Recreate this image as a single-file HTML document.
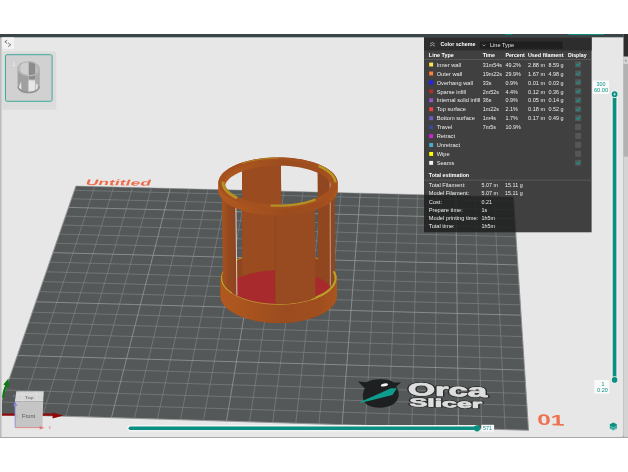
<!DOCTYPE html>
<html><head><meta charset="utf-8"><title>OrcaSlicer preview</title>
<style>html,body{margin:0;padding:0;background:#fff;}body{width:628px;height:472px;overflow:hidden;font-family:"Liberation Sans",sans-serif;}svg{display:block;opacity:0.999;will-change:transform}</style>
</head><body>
<svg width="628" height="472" viewBox="0 0 628 472" font-family="'Liberation Sans', sans-serif" shape-rendering="geometricPrecision">
<rect x="0" y="0" width="628" height="472" fill="#fff"/>
<rect x="0" y="34" width="628" height="404" fill="#a8a8a8"/>
<rect x="0" y="34" width="1.1" height="402.9" fill="#bcbcbc"/><rect x="1.1" y="34" width="1" height="402.9" fill="#d2d2d2"/>
<path d="M2,34 H623.3 V434.4 Q623.3,436.9 620.8,436.9 H2 Z" fill="#e7e7e7"/>
<rect x="623.6" y="34" width="4.4" height="402.9" fill="#d4d4d4"/>
<rect x="623.6" y="64" width="4.4" height="92.6" fill="#b2b2b2"/>
<rect x="623.6" y="56.5" width="4.4" height="7.5" fill="#d4d4d4"/>
<path d="M624.6,61.3 L625.8,59.6 L627,61.3 Z" fill="#888"/>
<clipPath id="vp"><path d="M2,37 H623.3 V434.4 Q623.3,436.9 620.8,436.9 H2 Z"/></clipPath>
<g clip-path="url(#vp)">
<polygon points="-3.00,414.20 528.50,430.30 513.40,197.00 75.90,186.10" fill="#545858"/>
<path d="M19.84,414.89L94.74,186.57M42.70,415.58L113.59,187.04M65.59,416.28L132.46,187.51M88.50,416.97L151.35,187.98M134.39,418.36L189.18,188.92M157.37,419.06L208.11,189.39M180.38,419.75L227.07,189.87M203.42,420.45L246.04,190.34M249.56,421.85L284.03,191.29M272.67,422.55L303.05,191.76M295.80,423.25L322.09,192.23M318.96,423.95L341.14,192.71M365.35,425.36L379.31,193.66M388.58,426.06L398.41,194.14M411.84,426.77L417.53,194.61M435.12,427.47L436.67,195.09M481.76,428.88L475.00,196.04M505.12,429.59L494.19,196.52M528.50,430.30L513.40,197.00M1.22,402.00L527.69,417.80M5.36,390.04L526.90,405.54M9.42,378.29L526.12,393.51M13.41,366.76L525.35,381.70M21.17,344.33L523.87,358.72M24.95,333.41L523.14,347.55M28.66,322.68L522.43,336.58M32.30,312.15L521.74,325.80M39.40,291.62L520.38,304.80M42.86,281.62L519.72,294.58M46.26,271.79L519.06,284.53M49.60,262.13L518.43,274.65M56.12,243.28L517.18,255.38M59.30,234.08L516.57,245.99M62.43,225.04L515.97,236.76M65.51,216.14L515.38,227.67M71.52,198.77L514.24,209.93M74.45,190.29L513.68,201.28" stroke="#868989" stroke-width="0.7" fill="none" opacity="0.85"/>
<path d="M-3.00,414.20L75.90,186.10M111.43,417.67L170.25,188.45M226.48,421.15L265.03,190.81M342.14,424.65L360.22,193.18M458.43,428.18L455.83,195.57M-3.00,414.20L528.50,430.30M17.32,355.44L524.60,370.10M35.88,301.80L521.05,315.21M52.89,252.62L517.80,264.93M68.54,207.39L514.81,218.73" stroke="#9fa1a1" stroke-width="0.75" fill="none" opacity="0.95"/>
<polygon points="-3.00,414.20 528.50,430.30 513.40,197.00 75.90,186.10" fill="none" stroke="#8a8d8d" stroke-width="0.5"/>
<g transform="matrix(1,0.013,-0.38,1,84.9,184.9)">
<text x="0.00" y="0.00" font-size="8.0" font-weight="bold" fill="#ee6b48" text-anchor="start" textLength="65.20" lengthAdjust="spacingAndGlyphs" >Untitled</text>
</g>
<g transform="matrix(1,0.03,0.04,1,537.5,424.8)">
<text x="0.00" y="0.00" font-size="15.2" font-weight="bold" fill="#ee7150" text-anchor="start" textLength="27.00" lengthAdjust="spacingAndGlyphs" >01</text>
</g>
<g id="logo">
<path d="M357.8,381.6 L366,382.2 Q372,379.2 381,379.3 Q389,379.4 394,382.4 L401.2,382.6 L396.2,386.6 Q399.3,391 398.6,396.5 Q396.5,405.8 383.5,407.6 Q368,408.8 363.8,401 Q361.5,394.5 364.8,388.2 Z" fill="#1d1f20"/>
<path d="M360.2,401.9 L391,388.3 L396.9,388.3 L392.4,395 L360.4,403 Z" fill="#0d9c8e"/>
<ellipse cx="384.4" cy="384.9" rx="3.6" ry="1.5" transform="rotate(-12 384.4 384.9)" fill="#f4f4f4"/>
<g transform="matrix(1,0.028,0,1,0,0)">
<text x="408.00" y="383.50" font-size="17.6" font-weight="bold" fill="#2b2d2d" text-anchor="start" textLength="79.20" lengthAdjust="spacingAndGlyphs" stroke="#2b2d2d" stroke-width="2.3" stroke-linejoin="round">Orca</text>
<text x="408.00" y="383.50" font-size="17.6" font-weight="bold" fill="#dedede" text-anchor="start" textLength="79.20" lengthAdjust="spacingAndGlyphs" stroke="#dedede" stroke-width="0.8" stroke-linejoin="round">Orca</text>
<text x="409.60" y="394.60" font-size="11.4" font-weight="bold" fill="#2b2d2d" text-anchor="start" textLength="72.50" lengthAdjust="spacingAndGlyphs" stroke="#2b2d2d" stroke-width="2.0" stroke-linejoin="round">Slicer</text>
<text x="409.60" y="394.60" font-size="11.4" font-weight="bold" fill="#dedede" text-anchor="start" textLength="72.50" lengthAdjust="spacingAndGlyphs" stroke="#dedede" stroke-width="0.7" stroke-linejoin="round">Slicer</text>
</g></g>
<path d="M2,413.5 H52.6 V412.4 L63.6,415.6 L52.6,418.6 V415.8 H2 Z" fill="#8f0a0a"/>
<path d="M2,397.8 Q2.6,390 5.2,385.4 L3.4,384.6 L8.4,378.6 L9.2,386.6 L7.4,386 Q4.6,391 4,397.8 Z" fill="#0a7a12"/>
<defs><linearGradient id="gring" gradientUnits="userSpaceOnUse" x1="218" y1="0" x2="338" y2="0"><stop offset="0" stop-color="#b2591f"/><stop offset="0.22" stop-color="#aa541f"/><stop offset="0.55" stop-color="#9b4c1f"/><stop offset="0.85" stop-color="#a04e1f"/><stop offset="1" stop-color="#ab561f"/></linearGradient><linearGradient id="gpil" gradientUnits="userSpaceOnUse" x1="221" y1="0" x2="237" y2="0"><stop offset="0" stop-color="#ab551f"/><stop offset="0.45" stop-color="#95491f"/><stop offset="1" stop-color="#8d4520"/></linearGradient></defs>
<polygon points="337.00,278.00 336.82,275.88 336.28,273.78 335.39,271.70 334.15,269.66 332.56,267.67 330.65,265.74 328.41,263.89 325.87,262.13 323.03,260.46 319.92,258.91 316.56,257.47 312.97,256.16 309.16,254.98 305.17,253.94 301.01,253.06 296.72,252.32 292.31,251.75 287.82,251.33 283.27,251.08 278.70,251.00 274.13,251.08 269.58,251.33 265.09,251.75 260.68,252.32 256.39,253.06 252.23,253.94 248.24,254.98 244.43,256.16 240.84,257.47 237.48,258.91 234.37,260.46 231.53,262.13 228.99,263.89 226.75,265.74 224.84,267.67 223.25,269.66 222.01,271.70 221.12,273.78 220.58,275.88 220.40,278.00 220.40,296.00 220.58,298.12 221.12,300.22 222.01,302.30 223.25,304.34 224.84,306.33 226.75,308.26 228.99,310.11 231.53,311.87 234.37,313.54 237.48,315.09 240.84,316.53 244.43,317.84 248.24,319.02 252.23,320.06 256.39,320.94 260.68,321.68 265.09,322.25 269.58,322.67 274.13,322.92 278.70,323.00 283.27,322.92 287.82,322.67 292.31,322.25 296.72,321.68 301.01,320.94 305.17,320.06 309.16,319.02 312.97,317.84 316.56,316.53 319.92,315.09 323.03,313.54 325.87,311.87 328.41,310.11 330.65,308.26 332.56,306.33 334.15,304.34 335.39,302.30 336.28,300.22 336.82,298.12 337.00,296.00" fill="#90461f" />
<polygon points="334.80,296.00 334.63,293.96 334.11,291.93 333.24,289.93 332.04,287.97 330.51,286.05 328.66,284.20 326.50,282.42 324.05,280.72 321.31,279.11 318.31,277.62 315.06,276.23 311.59,274.97 307.92,273.83 304.06,272.83 300.05,271.98 295.90,271.27 291.64,270.72 287.31,270.32 282.92,270.08 278.50,270.00 274.08,270.08 269.69,270.32 265.36,270.72 261.10,271.27 256.95,271.98 252.94,272.83 249.08,273.83 245.41,274.97 241.94,276.23 238.69,277.62 235.69,279.11 232.95,280.72 230.50,282.42 228.34,284.20 226.49,286.05 224.96,287.97 223.76,289.93 222.89,291.93 222.37,293.96 222.20,296.00 222.37,298.04 222.89,300.07 223.76,302.07 224.96,304.03 226.49,305.95 228.34,307.80 230.50,309.58 232.95,311.28 235.69,312.89 238.69,314.38 241.94,315.77 245.41,317.03 249.08,318.17 252.94,319.17 256.95,320.02 261.10,320.73 265.36,321.28 269.69,321.68 274.08,321.92 278.50,322.00 282.92,321.92 287.31,321.68 291.64,321.28 295.90,320.73 300.05,320.02 304.06,319.17 307.92,318.17 311.59,317.03 315.06,315.77 318.31,314.38 321.31,312.89 324.05,311.28 326.50,309.58 328.66,307.80 330.51,305.95 332.04,304.03 333.24,302.07 334.11,300.07 334.63,298.04 334.80,296.00" fill="#a82a2d" />
<polygon points="280.95,164.43 279.90,164.41 278.85,164.40 277.79,164.40 276.74,164.41 275.69,164.42 274.64,164.44 273.59,164.47 272.55,164.51 271.50,164.56 270.46,164.62 269.42,164.68 268.38,164.76 267.34,164.84 266.31,164.93 265.29,165.03 264.27,165.13 263.25,165.25 262.24,165.37 261.23,165.50 260.23,165.64 259.23,165.79 258.25,165.94 257.27,166.11 256.29,166.28 255.33,166.46 254.37,166.64 253.42,166.84 252.48,167.04 251.54,167.25 250.62,167.47 249.71,167.69 248.80,167.92 247.91,168.16 247.02,168.41 246.15,168.66 245.29,168.92 244.44,169.19 243.60,169.46 242.78,169.74 241.96,170.03 242.46,276.02 243.28,275.72 244.10,275.42 244.94,275.12 245.79,274.84 246.65,274.56 247.52,274.29 248.41,274.03 249.30,273.77 250.21,273.52 251.12,273.28 252.04,273.05 252.98,272.83 253.92,272.61 254.87,272.40 255.83,272.20 256.79,272.01 257.77,271.83 258.75,271.65 259.73,271.49 260.73,271.33 261.73,271.18 262.74,271.04 263.75,270.91 264.77,270.79 265.79,270.67 266.81,270.57 267.84,270.47 268.88,270.38 269.92,270.30 270.96,270.23 272.00,270.17 273.05,270.12 274.09,270.08 275.14,270.05 276.19,270.02 277.24,270.01 278.29,270.00 279.35,270.00 280.40,270.01 281.45,270.04" fill="#9a4b20" />
<polygon points="334.30,188.70 334.29,188.22 334.26,187.75 334.20,187.27 334.13,186.79 334.03,186.32 333.91,185.84 333.77,185.37 333.61,184.90 333.42,184.43 333.22,183.96 332.99,183.49 332.74,183.03 332.48,182.56 332.19,182.10 331.88,181.65 331.54,181.19 331.19,180.74 330.82,180.29 330.43,179.84 330.01,179.40 329.58,178.96 329.13,178.53 328.66,178.10 328.16,177.67 327.65,177.25 327.12,176.83 326.57,176.41 326.00,176.00 325.42,175.60 324.81,175.20 324.19,174.81 323.55,174.42 322.89,174.03 322.21,173.66 321.52,173.28 320.81,172.92 320.08,172.56 319.34,172.21 318.58,171.86 317.81,171.52 318.31,277.62 319.08,277.98 319.84,278.35 320.58,278.73 321.31,279.11 322.02,279.51 322.71,279.90 323.39,280.31 324.05,280.72 324.69,281.13 325.31,281.56 325.92,281.98 326.50,282.42 327.07,282.85 327.62,283.30 328.15,283.74 328.66,284.20 329.16,284.65 329.63,285.11 330.08,285.58 330.51,286.05 330.93,286.52 331.32,287.00 331.69,287.48 332.04,287.97 332.38,288.45 332.69,288.94 332.98,289.44 333.24,289.93 333.49,290.43 333.72,290.93 333.92,291.43 334.11,291.93 334.27,292.44 334.41,292.94 334.53,293.45 334.63,293.96 334.70,294.47 334.76,294.98 334.79,295.49 334.80,296.00" fill="#90461f" />
<polyline points="336.00,278.00 335.82,275.93 335.29,273.87 334.42,271.84 333.20,269.84 331.64,267.90 329.75,266.01 327.56,264.21 325.06,262.48 322.27,260.85 319.22,259.33 315.91,257.93 312.38,256.64 308.64,255.49 304.71,254.48 300.63,253.61 296.41,252.89 292.08,252.33 287.66,251.93 283.20,251.68 278.70,251.60 274.20,251.68 269.74,251.93 265.32,252.33 260.99,252.89 256.77,253.61 252.69,254.48 248.76,255.49 245.02,256.64 241.49,257.93 238.18,259.33 235.13,260.85 232.34,262.48 229.84,264.21 227.65,266.01 225.76,267.90 224.20,269.84 222.98,271.84 222.11,273.87 221.58,275.93 221.40,278.00" fill="none" stroke="#b8a126" stroke-width="1.0" />
<polygon points="280.95,164.43 279.90,164.41 278.85,164.40 277.79,164.40 276.74,164.41 275.69,164.42 274.64,164.44 273.59,164.47 272.55,164.51 271.50,164.56 270.46,164.62 269.42,164.68 268.38,164.76 267.34,164.84 266.31,164.93 265.29,165.03 264.27,165.13 263.25,165.25 262.24,165.37 261.23,165.50 260.23,165.64 259.23,165.79 258.25,165.94 257.27,166.11 256.29,166.28 255.33,166.46 254.37,166.64 253.42,166.84 252.48,167.04 251.54,167.25 250.62,167.47 249.71,167.69 248.80,167.92 247.91,168.16 247.02,168.41 246.15,168.66 245.29,168.92 244.44,169.19 243.60,169.46 242.78,169.74 241.96,170.03 242.92,259.10 243.73,258.80 244.55,258.50 245.38,258.20 246.22,257.92 247.08,257.64 247.94,257.37 248.82,257.11 249.71,256.86 250.61,256.61 251.51,256.37 252.43,256.14 253.36,255.91 254.29,255.70 255.23,255.49 256.19,255.29 257.15,255.10 258.11,254.92 259.09,254.75 260.07,254.58 261.06,254.42 262.05,254.28 263.05,254.14 264.05,254.00 265.06,253.88 266.08,253.77 267.10,253.66 268.12,253.57 269.15,253.48 270.18,253.40 271.21,253.33 272.25,253.27 273.28,253.22 274.32,253.18 275.37,253.15 276.41,253.12 277.45,253.11 278.50,253.10 279.54,253.10 280.58,253.11 281.63,253.14" fill="#9a4b20" />
<polygon points="334.30,188.70 334.29,188.22 334.26,187.75 334.20,187.27 334.13,186.79 334.03,186.32 333.91,185.84 333.77,185.37 333.61,184.90 333.42,184.43 333.22,183.96 332.99,183.49 332.74,183.03 332.48,182.56 332.19,182.10 331.88,181.65 331.54,181.19 331.19,180.74 330.82,180.29 330.43,179.84 330.01,179.40 329.58,178.96 329.13,178.53 328.66,178.10 328.16,177.67 327.65,177.25 327.12,176.83 326.57,176.41 326.00,176.00 325.42,175.60 324.81,175.20 324.19,174.81 323.55,174.42 322.89,174.03 322.21,173.66 321.52,173.28 320.81,172.92 320.08,172.56 319.34,172.21 318.58,171.86 317.81,171.52 318.23,260.69 319.00,261.05 319.75,261.42 320.49,261.80 321.21,262.18 321.91,262.57 322.60,262.97 323.27,263.37 323.92,263.78 324.56,264.19 325.18,264.61 325.78,265.04 326.36,265.47 326.93,265.90 327.47,266.34 328.00,266.79 328.51,267.24 329.00,267.70 329.47,268.16 329.91,268.62 330.34,269.09 330.75,269.56 331.14,270.04 331.51,270.51 331.86,271.00 332.19,271.48 332.50,271.97 332.79,272.46 333.06,272.95 333.30,273.45 333.53,273.95 333.73,274.45 333.91,274.95 334.07,275.45 334.21,275.96 334.33,276.46 334.43,276.97 334.50,277.48 334.56,277.98 334.59,278.49 334.60,279.00" fill="#90461f" />
<polygon points="334.60,278.80 334.43,276.77 333.91,274.75 333.06,272.75 331.86,270.80 330.34,268.89 328.51,267.04 326.36,265.27 323.92,263.58 321.21,261.98 318.23,260.49 315.00,259.11 311.56,257.85 307.91,256.72 304.08,255.72 300.09,254.87 295.97,254.17 291.75,253.62 287.44,253.22 283.09,252.98 278.70,252.90 274.31,252.98 269.96,253.22 265.65,253.62 261.43,254.17 257.31,254.87 253.32,255.72 249.49,256.72 245.84,257.85 242.40,259.11 239.17,260.49 236.19,261.98 233.48,263.58 231.04,265.27 228.89,267.04 227.06,268.89 225.54,270.80 224.34,272.75 223.49,274.75 222.97,276.77 222.80,278.80 222.20,296.00 222.37,293.96 222.89,291.93 223.76,289.93 224.96,287.97 226.49,286.05 228.34,284.20 230.50,282.42 232.95,280.72 235.69,279.11 238.69,277.62 241.94,276.23 245.41,274.97 249.08,273.83 252.94,272.83 256.95,271.98 261.10,271.27 265.36,270.72 269.69,270.32 274.08,270.08 278.50,270.00 282.92,270.08 287.31,270.32 291.64,270.72 295.90,271.27 300.05,271.98 304.06,272.83 307.92,273.83 311.59,274.97 315.06,276.23 318.31,277.62 321.31,279.11 324.05,280.72 326.50,282.42 328.66,284.20 330.51,286.05 332.04,287.97 333.24,289.93 334.11,291.93 334.63,293.96 334.80,296.00" fill="#90461f" />
<polygon points="280.95,164.43 279.90,164.41 278.85,164.40 277.79,164.40 276.74,164.41 275.69,164.42 274.64,164.44 273.59,164.47 272.55,164.51 271.50,164.56 270.46,164.62 269.42,164.68 268.38,164.76 267.34,164.84 266.31,164.93 265.29,165.03 264.27,165.13 263.25,165.25 262.24,165.37 261.23,165.50 260.23,165.64 259.23,165.79 258.25,165.94 257.27,166.11 256.29,166.28 255.33,166.46 254.37,166.64 253.42,166.84 252.48,167.04 251.54,167.25 250.62,167.47 249.71,167.69 248.80,167.92 247.91,168.16 247.02,168.41 246.15,168.66 245.29,168.92 244.44,169.19 243.60,169.46 242.78,169.74 241.96,170.03 242.46,276.02 243.28,275.72 244.10,275.42 244.94,275.12 245.79,274.84 246.65,274.56 247.52,274.29 248.41,274.03 249.30,273.77 250.21,273.52 251.12,273.28 252.04,273.05 252.98,272.83 253.92,272.61 254.87,272.40 255.83,272.20 256.79,272.01 257.77,271.83 258.75,271.65 259.73,271.49 260.73,271.33 261.73,271.18 262.74,271.04 263.75,270.91 264.77,270.79 265.79,270.67 266.81,270.57 267.84,270.47 268.88,270.38 269.92,270.30 270.96,270.23 272.00,270.17 273.05,270.12 274.09,270.08 275.14,270.05 276.19,270.02 277.24,270.01 278.29,270.00 279.35,270.00 280.40,270.01 281.45,270.04" fill="#9a4b20" />
<polygon points="334.30,188.70 334.29,188.22 334.26,187.75 334.20,187.27 334.13,186.79 334.03,186.32 333.91,185.84 333.77,185.37 333.61,184.90 333.42,184.43 333.22,183.96 332.99,183.49 332.74,183.03 332.48,182.56 332.19,182.10 331.88,181.65 331.54,181.19 331.19,180.74 330.82,180.29 330.43,179.84 330.01,179.40 329.58,178.96 329.13,178.53 328.66,178.10 328.16,177.67 327.65,177.25 327.12,176.83 326.57,176.41 326.00,176.00 325.42,175.60 324.81,175.20 324.19,174.81 323.55,174.42 322.89,174.03 322.21,173.66 321.52,173.28 320.81,172.92 320.08,172.56 319.34,172.21 318.58,171.86 317.81,171.52 318.31,277.62 319.08,277.98 319.84,278.35 320.58,278.73 321.31,279.11 322.02,279.51 322.71,279.90 323.39,280.31 324.05,280.72 324.69,281.13 325.31,281.56 325.92,281.98 326.50,282.42 327.07,282.85 327.62,283.30 328.15,283.74 328.66,284.20 329.16,284.65 329.63,285.11 330.08,285.58 330.51,286.05 330.93,286.52 331.32,287.00 331.69,287.48 332.04,287.97 332.38,288.45 332.69,288.94 332.98,289.44 333.24,289.93 333.49,290.43 333.72,290.93 333.92,291.43 334.11,291.93 334.27,292.44 334.41,292.94 334.53,293.45 334.63,293.96 334.70,294.47 334.76,294.98 334.79,295.49 334.80,296.00" fill="#90461f" />
<polygon points="220.40,278.00 220.58,280.12 221.12,282.22 222.01,284.30 223.25,286.34 224.84,288.33 226.75,290.26 228.99,292.11 231.53,293.87 234.37,295.54 237.48,297.09 240.84,298.53 244.43,299.84 248.24,301.02 252.23,302.06 256.39,302.94 260.68,303.68 265.09,304.25 269.58,304.67 274.13,304.92 278.70,305.00 283.27,304.92 287.82,304.67 292.31,304.25 296.72,303.68 301.01,302.94 305.17,302.06 309.16,301.02 312.97,299.84 316.56,298.53 319.92,297.09 323.03,295.54 325.87,293.87 328.41,292.11 330.65,290.26 332.56,288.33 334.15,286.34 335.39,284.30 336.28,282.22 336.82,280.12 337.00,278.00 337.00,296.00 336.82,298.12 336.28,300.22 335.39,302.30 334.15,304.34 332.56,306.33 330.65,308.26 328.41,310.11 325.87,311.87 323.03,313.54 319.92,315.09 316.56,316.53 312.97,317.84 309.16,319.02 305.17,320.06 301.01,320.94 296.72,321.68 292.31,322.25 287.82,322.67 283.27,322.92 278.70,323.00 274.13,322.92 269.58,322.67 265.09,322.25 260.68,321.68 256.39,320.94 252.23,320.06 248.24,319.02 244.43,317.84 240.84,316.53 237.48,315.09 234.37,313.54 231.53,311.87 228.99,310.11 226.75,308.26 224.84,306.33 223.25,304.34 222.01,302.30 221.12,300.22 220.58,298.12 220.40,296.00" fill="url(#gring)" />
<polyline points="221.30,278.00 221.48,280.07 222.01,282.13 222.89,284.16 224.11,286.16 225.67,288.10 227.56,289.99 229.76,291.79 232.26,293.52 235.05,295.15 238.11,296.67 241.42,298.07 244.96,299.36 248.71,300.51 252.64,301.52 256.73,302.39 260.96,303.11 265.30,303.67 269.72,304.07 274.20,304.32 278.70,304.40 283.20,304.32 287.68,304.07 292.10,303.67 296.44,303.11 300.67,302.39 304.76,301.52 308.69,300.51 312.44,299.36 315.98,298.07 319.29,296.67 322.35,295.15 325.14,293.52 327.64,291.79 329.84,289.99 331.73,288.10 333.29,286.16 334.51,284.16 335.39,282.13 335.92,280.07 336.10,278.00" fill="none" stroke="#b8a126" stroke-width="0.9" />
<polyline points="311.36,299.13 312.77,298.67 314.13,298.19 315.47,297.69 316.77,297.17 318.04,296.64 319.27,296.08 320.46,295.51 321.62,294.93 322.73,294.32 323.80,293.71 324.84,293.07 325.82,292.43 326.77,291.77 327.67,291.09 328.52,290.41 329.33,289.71 330.09,289.01 330.81,288.29 331.47,287.56 332.09,286.82 332.65,286.08 333.17,285.33 333.63,284.57 334.05,283.80 334.41,283.03 334.72,282.26 334.98,281.48 335.19,280.70 335.34,279.91 335.45,279.13 335.50,278.34 335.49,277.55 335.43,276.76 335.33,275.98 335.16,275.19 334.95,274.41 334.68,273.63 334.36,272.86 333.99,272.09 333.57,271.32" fill="none" stroke="#b8a126" stroke-width="2.2" />
<polyline points="221.74,276.18 221.68,276.62 221.64,277.07 221.61,277.51 221.60,277.95 221.61,278.40 221.63,278.84 221.67,279.29 221.73,279.73 221.80,280.17 221.89,280.61 221.99,281.06 222.11,281.50 222.25,281.94 222.41,282.38 222.58,282.81 222.77,283.25 222.97,283.68 223.19,284.12 223.43,284.55 223.68,284.97 223.94,285.40 224.23,285.83 224.53,286.25 224.84,286.67 225.17,287.09 225.52,287.50 225.88,287.91 226.26,288.32 226.65,288.73 227.06,289.13 227.48,289.53 227.91,289.93 228.37,290.32 228.83,290.71 229.31,291.10 229.81,291.48 230.32,291.86 230.84,292.23 231.38,292.60 231.93,292.97" fill="none" stroke="#b8a126" stroke-width="1.4" />
<polygon points="221.81,187.22 221.75,187.69 221.71,188.17 221.70,188.64 221.71,189.12 221.74,189.59 221.79,190.06 221.86,190.54 221.96,191.01 222.07,191.48 222.21,191.96 222.37,192.43 222.55,192.89 222.75,193.36 222.97,193.83 223.21,194.29 223.47,194.75 223.76,195.21 224.06,195.67 224.39,196.12 224.74,196.57 225.10,197.02 225.49,197.46 225.90,197.91 226.32,198.34 226.77,198.78 227.24,199.21 227.72,199.63 228.23,200.06 228.75,200.47 229.29,200.89 229.85,201.30 230.43,201.70 231.03,202.10 231.65,202.49 232.28,202.88 232.93,203.26 233.60,203.64 234.28,204.01 234.99,204.38 235.70,204.74 236.70,295.09 235.99,294.71 235.29,294.32 234.61,293.92 233.95,293.52 233.30,293.11 232.68,292.70 232.06,292.28 231.47,291.86 230.90,291.42 230.34,290.99 229.80,290.55 229.28,290.10 228.78,289.65 228.30,289.20 227.83,288.74 227.39,288.28 226.97,287.81 226.56,287.34 226.18,286.87 225.81,286.39 225.47,285.91 225.15,285.43 224.84,284.94 224.56,284.45 224.30,283.96 224.06,283.46 223.84,282.97 223.64,282.47 223.46,281.97 223.30,281.47 223.17,280.97 223.05,280.46 222.96,279.96 222.89,279.45 222.84,278.95 222.81,278.44 222.80,277.94 222.81,277.43 222.85,276.92 222.90,276.42" fill="url(#gpil)" />
<polygon points="274.56,212.95 275.66,212.98 276.76,212.99 277.86,213.00 278.95,213.00 280.05,212.98 281.15,212.96 282.24,212.93 283.34,212.89 284.43,212.84 285.52,212.78 286.61,212.71 287.69,212.64 288.77,212.55 289.84,212.46 290.92,212.35 291.98,212.24 293.04,212.12 294.10,211.99 295.15,211.85 296.19,211.70 297.23,211.54 298.25,211.37 299.27,211.20 300.29,211.01 301.29,210.82 302.29,210.62 303.27,210.41 304.25,210.20 305.22,209.97 306.17,209.74 307.12,209.50 308.05,209.25 308.97,208.99 309.88,208.73 310.78,208.46 311.67,208.18 312.54,207.89 313.40,207.59 314.25,207.29 315.08,206.98 315.52,297.49 314.69,297.82 313.85,298.14 313.00,298.45 312.13,298.76 311.25,299.06 310.36,299.35 309.45,299.63 308.54,299.90 307.61,300.17 306.67,300.42 305.72,300.67 304.76,300.91 303.79,301.14 302.81,301.37 301.83,301.58 300.83,301.78 299.82,301.98 298.81,302.17 297.79,302.34 296.76,302.51 295.73,302.67 294.68,302.82 293.64,302.96 292.58,303.09 291.52,303.21 290.46,303.32 289.39,303.42 288.32,303.51 287.24,303.60 286.17,303.67 285.08,303.73 284.00,303.78 282.91,303.83 281.83,303.86 280.74,303.88 279.65,303.90 278.56,303.90 277.47,303.89 276.38,303.88 275.29,303.85" fill="#984a20" />
<polygon points="334.19,190.18 334.20,190.15 334.21,190.11 334.21,190.07 334.21,190.04 334.22,190.00 334.22,189.96 334.23,189.92 334.23,189.89 334.24,189.85 334.24,189.81 334.24,189.78 334.25,189.74 334.25,189.70 334.26,189.66 334.26,189.63 334.26,189.59 334.27,189.55 334.27,189.52 334.27,189.48 334.27,189.44 334.28,189.40 334.28,189.37 334.28,189.33 334.28,189.29 334.29,189.26 334.29,189.22 334.29,189.18 334.29,189.15 334.29,189.11 334.29,189.07 334.29,189.03 334.30,189.00 334.30,188.96 334.30,188.92 334.30,188.89 334.30,188.85 334.30,188.81 334.30,188.77 334.30,188.74 334.30,188.70 334.60,278.00 334.60,278.04 334.60,278.08 334.60,278.12 334.60,278.16 334.60,278.20 334.60,278.24 334.60,278.28 334.60,278.32 334.59,278.36 334.59,278.40 334.59,278.44 334.59,278.47 334.59,278.51 334.59,278.55 334.59,278.59 334.58,278.63 334.58,278.67 334.58,278.71 334.58,278.75 334.57,278.79 334.57,278.83 334.57,278.87 334.57,278.91 334.56,278.95 334.56,278.99 334.56,279.03 334.55,279.07 334.55,279.11 334.55,279.15 334.54,279.19 334.54,279.23 334.53,279.27 334.53,279.30 334.52,279.34 334.52,279.38 334.52,279.42 334.51,279.46 334.51,279.50 334.50,279.54 334.50,279.58" fill="url(#gring)" />
<path d="M235.90,204.83L236.90,295.20" stroke="#e6ddd8" stroke-width="0.9"/>
<path d="M330.20,179.60L330.33,286.30" stroke="#e6ddd8" stroke-width="0.6"/>
<path d="M274.76,212.96L275.48,303.86" stroke="#8e3f17" stroke-width="0.5"/>
<path d="M337.70,183.20L337.52,181.18L336.96,179.16L336.05,177.18L334.78,175.23L333.16,173.33L331.19,171.49L328.90,169.72L326.30,168.04L323.40,166.44L320.21,164.96L316.77,163.58L313.09,162.33L309.19,161.20L305.10,160.21L300.85,159.36L296.45,158.66L291.94,158.11L287.34,157.72L282.68,157.48L278.00,157.40L273.32,157.48L268.66,157.72L264.06,158.11L259.55,158.66L255.15,159.36L250.90,160.21L246.81,161.20L242.91,162.33L239.23,163.58L235.79,164.96L232.60,166.44L229.70,168.04L227.10,169.72L224.81,171.49L222.84,173.33L221.22,175.23L219.95,177.18L219.04,179.16L218.48,181.18L218.30,183.20L218.30,189.80L218.48,191.82L219.04,193.84L219.95,195.82L221.22,197.77L222.84,199.67L224.81,201.51L227.10,203.28L229.70,204.96L232.60,206.56L235.79,208.04L239.23,209.42L242.91,210.67L246.81,211.80L250.90,212.79L255.15,213.64L259.55,214.34L264.06,214.89L268.66,215.28L273.32,215.52L278.00,215.60L282.68,215.52L287.34,215.28L291.94,214.89L296.45,214.34L300.85,213.64L305.10,212.79L309.19,211.80L313.09,210.67L316.77,209.42L320.21,208.04L323.40,206.56L326.30,204.96L328.90,203.28L331.19,201.51L333.16,199.67L334.78,197.77L336.05,195.82L336.96,193.84L337.52,191.82L337.70,189.80Z M225.27,184.39L225.94,182.94L226.61,181.85L227.28,180.94L227.95,180.14L228.62,179.43L229.29,178.78L229.96,178.18L230.63,177.62L231.30,177.10L231.97,176.61L232.64,176.15L233.31,175.71L233.98,175.30L234.65,174.90L235.32,174.52L235.99,174.16L236.66,173.81L237.33,173.47L238.00,173.15L238.67,172.84L239.34,172.54L240.01,172.25L240.68,171.97L241.35,171.71L242.02,171.45L242.69,171.20L243.36,170.95L244.03,170.72L244.70,170.49L245.37,170.27L246.04,170.06L246.71,169.85L247.38,169.66L248.05,169.46L248.72,169.28L249.39,169.10L250.06,168.92L250.73,168.75L251.40,168.59L252.07,168.43L252.74,168.28L253.41,168.13L254.08,167.99L254.75,167.85L255.42,167.71L256.09,167.59L256.76,167.46L257.43,167.34L258.10,167.23L258.77,167.12L259.44,167.01L260.11,166.91L260.78,166.81L261.45,166.72L262.12,166.63L262.79,166.54L263.46,166.46L264.13,166.38L264.80,166.31L265.47,166.24L266.14,166.17L266.81,166.11L267.48,166.05L268.15,166.00L268.82,165.94L269.49,165.90L270.16,165.85L270.83,165.81L271.50,165.77L272.17,165.74L272.84,165.71L273.51,165.69L274.18,165.66L274.85,165.64L275.52,165.63L276.19,165.62L276.86,165.61L277.53,165.60L278.20,165.60L278.87,165.60L279.54,165.61L280.21,165.62L280.88,165.63L281.55,165.64L282.22,165.66L282.89,165.69L283.56,165.71L284.23,165.74L284.90,165.77L285.57,165.81L286.24,165.85L286.91,165.90L287.58,165.94L288.25,166.00L288.92,166.05L289.59,166.11L290.26,166.17L290.93,166.24L291.60,166.31L292.27,166.38L292.94,166.46L293.61,166.54L294.28,166.63L294.95,166.72L295.62,166.81L296.29,166.91L296.96,167.01L297.63,167.12L298.30,167.23L298.97,167.34L299.64,167.46L300.31,167.59L300.98,167.71L301.65,167.85L302.32,167.99L302.99,168.13L303.66,168.28L304.33,168.43L305.00,168.59L305.67,168.75L306.34,168.92L307.01,169.10L307.68,169.28L308.35,169.46L309.02,169.66L309.69,169.85L310.36,170.06L311.03,170.27L311.70,170.49L312.37,170.72L313.04,170.95L313.71,171.20L314.38,171.45L315.05,171.71L315.72,171.97L316.39,172.25L317.06,172.54L317.73,172.84L318.40,173.15L319.07,173.47L319.74,173.81L320.41,174.16L321.08,174.52L321.75,174.90L322.42,175.30L323.09,175.71L323.76,176.15L324.43,176.61L325.10,177.10L325.77,177.62L326.44,178.18L327.11,178.78L327.78,179.43L328.45,180.14L329.12,180.94L329.79,181.85L330.46,182.94L331.13,184.39L331.13,185.91L330.46,187.36L329.79,188.45L329.12,189.36L328.45,190.16L327.78,190.87L327.11,191.52L326.44,192.12L325.77,192.68L325.10,193.20L324.43,193.69L323.76,194.15L323.09,194.59L322.42,195.00L321.75,195.40L321.08,195.78L320.41,196.14L319.74,196.49L319.07,196.83L318.40,197.15L317.73,197.46L317.06,197.76L316.39,198.05L315.72,198.33L315.05,198.59L314.38,198.85L313.71,199.10L313.04,199.35L312.37,199.58L311.70,199.81L311.03,200.03L310.36,200.24L309.69,200.45L309.02,200.64L308.35,200.84L307.68,201.02L307.01,201.20L306.34,201.38L305.67,201.55L305.00,201.71L304.33,201.87L303.66,202.02L302.99,202.17L302.32,202.31L301.65,202.45L300.98,202.59L300.31,202.71L299.64,202.84L298.97,202.96L298.30,203.07L297.63,203.18L296.96,203.29L296.29,203.39L295.62,203.49L294.95,203.58L294.28,203.67L293.61,203.76L292.94,203.84L292.27,203.92L291.60,203.99L290.93,204.06L290.26,204.13L289.59,204.19L288.92,204.25L288.25,204.30L287.58,204.36L286.91,204.40L286.24,204.45L285.57,204.49L284.90,204.53L284.23,204.56L283.56,204.59L282.89,204.61L282.22,204.64L281.55,204.66L280.88,204.67L280.21,204.68L279.54,204.69L278.87,204.70L278.20,204.70L277.53,204.70L276.86,204.69L276.19,204.68L275.52,204.67L274.85,204.66L274.18,204.64L273.51,204.61L272.84,204.59L272.17,204.56L271.50,204.53L270.83,204.49L270.16,204.45L269.49,204.40L268.82,204.36L268.15,204.30L267.48,204.25L266.81,204.19L266.14,204.13L265.47,204.06L264.80,203.99L264.13,203.92L263.46,203.84L262.79,203.76L262.12,203.67L261.45,203.58L260.78,203.49L260.11,203.39L259.44,203.29L258.77,203.18L258.10,203.07L257.43,202.96L256.76,202.84L256.09,202.71L255.42,202.59L254.75,202.45L254.08,202.31L253.41,202.17L252.74,202.02L252.07,201.87L251.40,201.71L250.73,201.55L250.06,201.38L249.39,201.20L248.72,201.02L248.05,200.84L247.38,200.64L246.71,200.45L246.04,200.24L245.37,200.03L244.70,199.81L244.03,199.58L243.36,199.35L242.69,199.10L242.02,198.85L241.35,198.59L240.68,198.33L240.01,198.05L239.34,197.76L238.67,197.46L238.00,197.15L237.33,196.83L236.66,196.49L235.99,196.14L235.32,195.78L234.65,195.40L233.98,195.00L233.31,194.59L232.64,194.15L231.97,193.69L231.30,193.20L230.63,192.68L229.96,192.12L229.29,191.52L228.62,190.87L227.95,190.16L227.28,189.36L226.61,188.45L225.94,187.36L225.27,185.91Z" fill="url(#gring)" fill-rule="evenodd"/>
<path d="M337.70,183.20L337.52,181.18L336.96,179.16L336.05,177.18L334.78,175.23L333.16,173.33L331.19,171.49L328.90,169.72L326.30,168.04L323.40,166.44L320.21,164.96L316.77,163.58L313.09,162.33L309.19,161.20L305.10,160.21L300.85,159.36L296.45,158.66L291.94,158.11L287.34,157.72L282.68,157.48L278.00,157.40L273.32,157.48L268.66,157.72L264.06,158.11L259.55,158.66L255.15,159.36L250.90,160.21L246.81,161.20L242.91,162.33L239.23,163.58L235.79,164.96L232.60,166.44L229.70,168.04L227.10,169.72L224.81,171.49L222.84,173.33L221.22,175.23L219.95,177.18L219.04,179.16L218.48,181.18L218.30,183.20L218.48,185.22L219.04,187.24L219.95,189.22L221.22,191.17L222.84,193.07L224.81,194.91L227.10,196.68L229.70,198.36L232.60,199.96L235.79,201.44L239.23,202.82L242.91,204.07L246.81,205.20L250.90,206.19L255.15,207.04L259.55,207.74L264.06,208.29L268.66,208.68L273.32,208.92L278.00,209.00L282.68,208.92L287.34,208.68L291.94,208.29L296.45,207.74L300.85,207.04L305.10,206.19L309.19,205.20L313.09,204.07L316.77,202.82L320.21,201.44L323.40,199.96L326.30,198.36L328.90,196.68L331.19,194.91L333.16,193.07L334.78,191.17L336.05,189.22L336.96,187.24L337.52,185.22L337.70,183.20Z M331.80,182.40L331.63,180.65L331.14,178.91L330.32,177.19L329.18,175.51L327.72,173.87L325.96,172.28L323.90,170.75L321.56,169.29L318.96,167.92L316.10,166.63L313.01,165.44L309.71,164.36L306.21,163.39L302.53,162.53L298.71,161.80L294.76,161.19L290.71,160.72L286.58,160.37L282.41,160.17L278.20,160.10L273.99,160.17L269.82,160.37L265.69,160.72L261.64,161.19L257.69,161.80L253.87,162.53L250.19,163.39L246.69,164.36L243.39,165.44L240.30,166.63L237.44,167.92L234.84,169.29L232.50,170.75L230.44,172.28L228.68,173.87L227.22,175.51L226.08,177.19L225.26,178.91L224.77,180.65L224.60,182.40L224.77,184.15L225.26,185.89L226.08,187.61L227.22,189.29L228.68,190.93L230.44,192.52L232.50,194.05L234.84,195.51L237.44,196.88L240.30,198.17L243.39,199.36L246.69,200.44L250.19,201.41L253.87,202.27L257.69,203.00L261.64,203.61L265.69,204.08L269.82,204.43L273.99,204.63L278.20,204.70L282.41,204.63L286.58,204.43L290.71,204.08L294.76,203.61L298.71,203.00L302.53,202.27L306.21,201.41L309.71,200.44L313.01,199.36L316.10,198.17L318.96,196.88L321.56,195.51L323.90,194.05L325.96,192.52L327.72,190.93L329.18,189.29L330.32,187.61L331.14,185.89L331.63,184.15L331.80,182.40Z" fill="#a4501f" fill-rule="evenodd"/>
<polygon points="218.30,183.20 218.48,185.22 219.04,187.24 219.95,189.22 221.22,191.17 222.84,193.07 224.81,194.91 227.10,196.68 229.70,198.36 232.60,199.96 235.79,201.44 239.23,202.82 242.91,204.07 246.81,205.20 250.90,206.19 255.15,207.04 259.55,207.74 264.06,208.29 268.66,208.68 273.32,208.92 278.00,209.00 282.68,208.92 287.34,208.68 291.94,208.29 296.45,207.74 300.85,207.04 305.10,206.19 309.19,205.20 313.09,204.07 316.77,202.82 320.21,201.44 323.40,199.96 326.30,198.36 328.90,196.68 331.19,194.91 333.16,193.07 334.78,191.17 336.05,189.22 336.96,187.24 337.52,185.22 337.70,183.20 337.70,189.80 337.52,191.82 336.96,193.84 336.05,195.82 334.78,197.77 333.16,199.67 331.19,201.51 328.90,203.28 326.30,204.96 323.40,206.56 320.21,208.04 316.77,209.42 313.09,210.67 309.19,211.80 305.10,212.79 300.85,213.64 296.45,214.34 291.94,214.89 287.34,215.28 282.68,215.52 278.00,215.60 273.32,215.52 268.66,215.28 264.06,214.89 259.55,214.34 255.15,213.64 250.90,212.79 246.81,211.80 242.91,210.67 239.23,209.42 235.79,208.04 232.60,206.56 229.70,204.96 227.10,203.28 224.81,201.51 222.84,199.67 221.22,197.77 219.95,195.82 219.04,193.84 218.48,191.82 218.30,189.80" fill="url(#gring)" />
<polyline points="278.00,158.10 277.03,158.10 276.06,158.11 275.09,158.13 274.12,158.16 273.16,158.19 272.19,158.22 271.23,158.27 270.26,158.32 269.30,158.38 268.34,158.44 267.39,158.52 266.44,158.60 265.49,158.68 264.54,158.77 263.60,158.87 262.66,158.98 261.73,159.09 260.80,159.21 259.87,159.34 258.95,159.47 258.04,159.61 257.13,159.75 256.23,159.90 255.33,160.06 254.44,160.23 253.55,160.40 252.68,160.57 251.81,160.76 250.94,160.95 250.09,161.14 249.24,161.34 248.40,161.55 247.56,161.76 246.74,161.98 245.92,162.21 245.12,162.44 244.32,162.68 243.53,162.92 242.75,163.17 241.98,163.42" fill="none" stroke="#b8a126" stroke-width="1.1" opacity="0.6"/>
<polyline points="335.42,182.35 335.37,181.89 335.30,181.44 335.21,180.98 335.10,180.53 334.97,180.07 334.83,179.62 334.66,179.17 334.47,178.72 334.26,178.27 334.03,177.83 333.79,177.38 333.52,176.94 333.23,176.50 332.93,176.06 332.60,175.62 332.25,175.19 331.89,174.76 331.51,174.34 331.11,173.91 330.69,173.49 330.25,173.07 329.79,172.66 329.31,172.25 328.82,171.84 328.31,171.44 327.78,171.04 327.23,170.65 326.67,170.26 326.09,169.88 325.49,169.50 324.87,169.12 324.24,168.75 323.59,168.39 322.93,168.03 322.25,167.67 321.55,167.32 320.84,166.98 320.12,166.64 319.38,166.31 318.62,165.98" fill="none" stroke="#b8a126" stroke-width="2.4" opacity="0.9"/>
<polyline points="223.03,181.59 223.01,182.03 223.00,182.48 223.01,182.93 223.05,183.38 223.10,183.82 223.18,184.27 223.27,184.71 223.39,185.16 223.52,185.60 223.68,186.04 223.86,186.49 224.05,186.93 224.27,187.36 224.50,187.80 224.76,188.23 225.03,188.67 225.33,189.10 225.64,189.52 225.98,189.95 226.33,190.37 226.70,190.79 227.09,191.20 227.50,191.62 227.93,192.03 228.38,192.43 228.84,192.83 229.33,193.23 229.83,193.62 230.35,194.01 230.88,194.40 231.44,194.78 232.01,195.16 232.60,195.53 233.20,195.90 233.83,196.26 234.47,196.62 235.12,196.97 235.79,197.31 236.48,197.66 237.18,197.99" fill="none" stroke="#b8a126" stroke-width="3.0" opacity="0.8"/>
<polyline points="270.56,205.47 271.77,205.54 272.99,205.59 274.20,205.64 275.42,205.67 276.64,205.69 277.86,205.70 279.09,205.70 280.31,205.68 281.53,205.66 282.75,205.62 283.96,205.57 285.18,205.51 286.39,205.44 287.59,205.36 288.79,205.26 289.99,205.16 291.18,205.04 292.36,204.91 293.54,204.77 294.71,204.62 295.87,204.46 297.02,204.29 298.16,204.10 299.30,203.91 300.42,203.71 301.53,203.49 302.63,203.27 303.72,203.03 304.80,202.78 305.86,202.53 306.91,202.26 307.94,201.99 308.96,201.70 309.96,201.40 310.95,201.10 311.92,200.79 312.88,200.46 313.82,200.13 314.74,199.79 315.64,199.44" fill="none" stroke="#b8a126" stroke-width="2.3" opacity="0.8"/>
</g>
<rect x="0" y="34" width="623.6" height="3.3" fill="#3a4547"/>
<rect x="623.6" y="34" width="4.4" height="22.5" fill="#2d2d2d"/>
<rect x="505" y="34" width="7" height="0.7" fill="#0a9a8c"/>
<rect x="568.5" y="34" width="35.5" height="0.8" fill="#0a9a8c"/>
<rect x="424" y="37.3" width="167.60000000000002" height="195.0" fill="rgb(27,27,27)" fill-opacity="0.82"/>
<rect x="424" y="37.3" width="167.60000000000002" height="13.200000000000003" fill="#2d2d2d"/>
<rect x="479.9" y="41.4" width="82.6" height="7.4" rx="1" fill="#1f1f1f"/>
<path d="M482.4,44.6 L483.9,46 L485.4,44.6" stroke="#ddd" stroke-width="0.6" fill="none"/>
<path d="M430,44 L432.4,42.5 L434.8,44 M430,46.2 L432.4,44.7 L434.8,46.2" stroke="#e8e8e8" stroke-width="0.6" fill="none"/>
<text x="440.40" y="46.20" font-size="6" font-weight="bold" fill="#fff" text-anchor="start" textLength="35.00" lengthAdjust="spacingAndGlyphs" >Color scheme</text>
<text x="490.00" y="47.00" font-size="6"  fill="#e6e6e6" text-anchor="start" textLength="24.10" lengthAdjust="spacingAndGlyphs" >Line Type</text>
<text x="428.80" y="56.60" font-size="6" font-weight="bold" fill="#fff" text-anchor="start" textLength="25.10" lengthAdjust="spacingAndGlyphs" >Line Type</text>
<text x="482.70" y="56.60" font-size="6" font-weight="bold" fill="#fff" text-anchor="start" textLength="12.23" lengthAdjust="spacingAndGlyphs" >Time</text>
<text x="505.40" y="56.60" font-size="6" font-weight="bold" fill="#fff" text-anchor="start" textLength="19.37" lengthAdjust="spacingAndGlyphs" >Percent</text>
<text x="527.90" y="56.60" font-size="6" font-weight="bold" fill="#fff" text-anchor="start" textLength="35.61" lengthAdjust="spacingAndGlyphs" >Used filament</text>
<text x="567.90" y="56.60" font-size="6" font-weight="bold" fill="#fff" text-anchor="start" textLength="18.70" lengthAdjust="spacingAndGlyphs" >Display</text>
<rect x="424" y="59" width="167.6" height="0.6" fill="#6a6a6a"/>
<rect x="429.2" y="62.60" width="3.9" height="3.9" fill="#FFE64D"/>
<text x="436.70" y="66.70" font-size="6"  fill="#ececec" text-anchor="start" textLength="24.27" lengthAdjust="spacingAndGlyphs" >Inner wall</text>
<text x="482.70" y="66.70" font-size="6"  fill="#ececec" text-anchor="start" textLength="19.21" lengthAdjust="spacingAndGlyphs" >31m54s</text>
<text x="505.40" y="66.70" font-size="6"  fill="#ececec" text-anchor="start" textLength="15.31" lengthAdjust="spacingAndGlyphs" >49.2%</text>
<text x="528.10" y="66.70" font-size="6"  fill="#ececec" text-anchor="start" textLength="17.06" lengthAdjust="spacingAndGlyphs" >2.88 m</text>
<text x="548.40" y="66.70" font-size="6"  fill="#ececec" text-anchor="start" textLength="15.01" lengthAdjust="spacingAndGlyphs" >8.59 g</text>
<rect x="575.1" y="61.40" width="6" height="6" fill="#565656"/>
<path d="M576.3,64.40 L577.7,65.90 L580.2,62.80" stroke="#0d9c8e" stroke-width="1.1" fill="none"/>
<rect x="429.2" y="71.54" width="3.9" height="3.9" fill="#FF7D38"/>
<text x="436.70" y="75.64" font-size="6"  fill="#ececec" text-anchor="start" textLength="25.52" lengthAdjust="spacingAndGlyphs" >Outer wall</text>
<text x="482.70" y="75.64" font-size="6"  fill="#ececec" text-anchor="start" textLength="19.21" lengthAdjust="spacingAndGlyphs" >19m22s</text>
<text x="505.40" y="75.64" font-size="6"  fill="#ececec" text-anchor="start" textLength="15.31" lengthAdjust="spacingAndGlyphs" >29.9%</text>
<text x="528.10" y="75.64" font-size="6"  fill="#ececec" text-anchor="start" textLength="17.06" lengthAdjust="spacingAndGlyphs" >1.67 m</text>
<text x="548.40" y="75.64" font-size="6"  fill="#ececec" text-anchor="start" textLength="15.01" lengthAdjust="spacingAndGlyphs" >4.98 g</text>
<rect x="575.1" y="70.34" width="6" height="6" fill="#565656"/>
<path d="M576.3,73.34 L577.7,74.84 L580.2,71.74" stroke="#0d9c8e" stroke-width="1.1" fill="none"/>
<rect x="429.2" y="80.48" width="3.9" height="3.9" fill="#1F1FFF"/>
<text x="436.70" y="84.58" font-size="6"  fill="#ececec" text-anchor="start" textLength="36.24" lengthAdjust="spacingAndGlyphs" >Overhang wall</text>
<text x="482.70" y="84.58" font-size="6"  fill="#ececec" text-anchor="start" textLength="8.71" lengthAdjust="spacingAndGlyphs" >33s</text>
<text x="505.40" y="84.58" font-size="6"  fill="#ececec" text-anchor="start" textLength="12.31" lengthAdjust="spacingAndGlyphs" >0.9%</text>
<text x="528.10" y="84.58" font-size="6"  fill="#ececec" text-anchor="start" textLength="17.06" lengthAdjust="spacingAndGlyphs" >0.01 m</text>
<text x="548.40" y="84.58" font-size="6"  fill="#ececec" text-anchor="start" textLength="15.01" lengthAdjust="spacingAndGlyphs" >0.03 g</text>
<rect x="575.1" y="79.28" width="6" height="6" fill="#565656"/>
<path d="M576.3,82.28 L577.7,83.78 L580.2,80.68" stroke="#0d9c8e" stroke-width="1.1" fill="none"/>
<rect x="429.2" y="89.42" width="3.9" height="3.9" fill="#B03029"/>
<text x="436.70" y="93.52" font-size="6"  fill="#ececec" text-anchor="start" textLength="29.31" lengthAdjust="spacingAndGlyphs" >Sparse infill</text>
<text x="482.70" y="93.52" font-size="6"  fill="#ececec" text-anchor="start" textLength="16.21" lengthAdjust="spacingAndGlyphs" >2m52s</text>
<text x="505.40" y="93.52" font-size="6"  fill="#ececec" text-anchor="start" textLength="12.31" lengthAdjust="spacingAndGlyphs" >4.4%</text>
<text x="528.10" y="93.52" font-size="6"  fill="#ececec" text-anchor="start" textLength="17.06" lengthAdjust="spacingAndGlyphs" >0.12 m</text>
<text x="548.40" y="93.52" font-size="6"  fill="#ececec" text-anchor="start" textLength="15.01" lengthAdjust="spacingAndGlyphs" >0.36 g</text>
<rect x="575.1" y="88.22" width="6" height="6" fill="#565656"/>
<path d="M576.3,91.22 L577.7,92.72 L580.2,89.62" stroke="#0d9c8e" stroke-width="1.1" fill="none"/>
<rect x="429.2" y="98.36" width="3.9" height="3.9" fill="#9654CC"/>
<text x="436.70" y="102.46" font-size="6"  fill="#ececec" text-anchor="start" textLength="43.49" lengthAdjust="spacingAndGlyphs" >Internal solid infill</text>
<text x="482.70" y="102.46" font-size="6"  fill="#ececec" text-anchor="start" textLength="8.71" lengthAdjust="spacingAndGlyphs" >36s</text>
<text x="505.40" y="102.46" font-size="6"  fill="#ececec" text-anchor="start" textLength="12.31" lengthAdjust="spacingAndGlyphs" >0.9%</text>
<text x="528.10" y="102.46" font-size="6"  fill="#ececec" text-anchor="start" textLength="17.06" lengthAdjust="spacingAndGlyphs" >0.05 m</text>
<text x="548.40" y="102.46" font-size="6"  fill="#ececec" text-anchor="start" textLength="15.01" lengthAdjust="spacingAndGlyphs" >0.14 g</text>
<rect x="575.1" y="97.16" width="6" height="6" fill="#565656"/>
<path d="M576.3,100.16 L577.7,101.66 L580.2,98.56" stroke="#0d9c8e" stroke-width="1.1" fill="none"/>
<rect x="429.2" y="107.30" width="3.9" height="3.9" fill="#F04040"/>
<text x="436.70" y="111.40" font-size="6"  fill="#ececec" text-anchor="start" textLength="29.31" lengthAdjust="spacingAndGlyphs" >Top surface</text>
<text x="482.70" y="111.40" font-size="6"  fill="#ececec" text-anchor="start" textLength="16.21" lengthAdjust="spacingAndGlyphs" >1m22s</text>
<text x="505.40" y="111.40" font-size="6"  fill="#ececec" text-anchor="start" textLength="12.31" lengthAdjust="spacingAndGlyphs" >2.1%</text>
<text x="528.10" y="111.40" font-size="6"  fill="#ececec" text-anchor="start" textLength="17.06" lengthAdjust="spacingAndGlyphs" >0.18 m</text>
<text x="548.40" y="111.40" font-size="6"  fill="#ececec" text-anchor="start" textLength="15.01" lengthAdjust="spacingAndGlyphs" >0.52 g</text>
<rect x="575.1" y="106.10" width="6" height="6" fill="#565656"/>
<path d="M576.3,109.10 L577.7,110.60 L580.2,107.50" stroke="#0d9c8e" stroke-width="1.1" fill="none"/>
<rect x="429.2" y="116.24" width="3.9" height="3.9" fill="#665CC7"/>
<text x="436.70" y="120.34" font-size="6"  fill="#ececec" text-anchor="start" textLength="38.13" lengthAdjust="spacingAndGlyphs" >Bottom surface</text>
<text x="482.70" y="120.34" font-size="6"  fill="#ececec" text-anchor="start" textLength="13.21" lengthAdjust="spacingAndGlyphs" >1m4s</text>
<text x="505.40" y="120.34" font-size="6"  fill="#ececec" text-anchor="start" textLength="12.31" lengthAdjust="spacingAndGlyphs" >1.7%</text>
<text x="528.10" y="120.34" font-size="6"  fill="#ececec" text-anchor="start" textLength="17.06" lengthAdjust="spacingAndGlyphs" >0.17 m</text>
<text x="548.40" y="120.34" font-size="6"  fill="#ececec" text-anchor="start" textLength="15.01" lengthAdjust="spacingAndGlyphs" >0.49 g</text>
<rect x="575.1" y="115.04" width="6" height="6" fill="#565656"/>
<path d="M576.3,118.04 L577.7,119.54 L580.2,116.44" stroke="#0d9c8e" stroke-width="1.1" fill="none"/>
<rect x="429.2" y="125.18" width="3.9" height="3.9" fill="#38489B"/>
<text x="436.70" y="129.28" font-size="6"  fill="#ececec" text-anchor="start" textLength="15.54" lengthAdjust="spacingAndGlyphs" >Travel</text>
<text x="482.70" y="129.28" font-size="6"  fill="#ececec" text-anchor="start" textLength="13.21" lengthAdjust="spacingAndGlyphs" >7m5s</text>
<text x="505.40" y="129.28" font-size="6"  fill="#ececec" text-anchor="start" textLength="15.31" lengthAdjust="spacingAndGlyphs" >10.9%</text>
<rect x="575.1" y="123.98" width="6" height="6" fill="#565656"/>
<rect x="429.2" y="134.12" width="3.9" height="3.9" fill="#CD22D6"/>
<text x="436.70" y="138.22" font-size="6"  fill="#ececec" text-anchor="start" textLength="18.28" lengthAdjust="spacingAndGlyphs" >Retract</text>
<rect x="575.1" y="132.92" width="6" height="6" fill="#565656"/>
<rect x="429.2" y="143.06" width="3.9" height="3.9" fill="#49ADCF"/>
<text x="436.70" y="147.16" font-size="6"  fill="#ececec" text-anchor="start" textLength="23.32" lengthAdjust="spacingAndGlyphs" >Unretract</text>
<rect x="575.1" y="141.86" width="6" height="6" fill="#565656"/>
<rect x="429.2" y="152.00" width="3.9" height="3.9" fill="#FFFF00"/>
<text x="436.70" y="156.10" font-size="6"  fill="#ececec" text-anchor="start" textLength="12.92" lengthAdjust="spacingAndGlyphs" >Wipe</text>
<rect x="575.1" y="150.80" width="6" height="6" fill="#565656"/>
<rect x="429.2" y="160.94" width="3.9" height="3.9" fill="#F2F2F2"/>
<text x="436.70" y="165.04" font-size="6"  fill="#ececec" text-anchor="start" textLength="17.65" lengthAdjust="spacingAndGlyphs" >Seams</text>
<rect x="575.1" y="159.74" width="6" height="6" fill="#565656"/>
<path d="M576.3,162.74 L577.7,164.24 L580.2,161.14" stroke="#0d9c8e" stroke-width="1.1" fill="none"/>
<text x="428.80" y="177.40" font-size="6" font-weight="bold" fill="#fff" text-anchor="start" textLength="40.32" lengthAdjust="spacingAndGlyphs" >Total estimation</text>
<rect x="424" y="179.8" width="167.6" height="0.6" fill="#6a6a6a"/>
<text x="428.80" y="187.30" font-size="6"  fill="#ececec" text-anchor="start" textLength="36.87" lengthAdjust="spacingAndGlyphs" >Total Filament:</text>
<text x="481.60" y="187.30" font-size="6"  fill="#ececec" text-anchor="start" textLength="16.51" lengthAdjust="spacingAndGlyphs" >5.07 m</text>
<text x="505.10" y="187.30" font-size="6"  fill="#ececec" text-anchor="start" textLength="17.62" lengthAdjust="spacingAndGlyphs" >15.11 g</text>
<text x="428.80" y="195.44" font-size="6"  fill="#ececec" text-anchor="start" textLength="40.34" lengthAdjust="spacingAndGlyphs" >Model Filament:</text>
<text x="481.60" y="195.44" font-size="6"  fill="#ececec" text-anchor="start" textLength="16.51" lengthAdjust="spacingAndGlyphs" >5.07 m</text>
<text x="505.10" y="195.44" font-size="6"  fill="#ececec" text-anchor="start" textLength="17.62" lengthAdjust="spacingAndGlyphs" >15.11 g</text>
<text x="428.80" y="203.58" font-size="6"  fill="#ececec" text-anchor="start" textLength="13.23" lengthAdjust="spacingAndGlyphs" >Cost:</text>
<text x="481.60" y="203.58" font-size="6"  fill="#ececec" text-anchor="start" textLength="10.51" lengthAdjust="spacingAndGlyphs" >0.21</text>
<text x="428.80" y="211.72" font-size="6"  fill="#ececec" text-anchor="start" textLength="34.04" lengthAdjust="spacingAndGlyphs" >Prepare time:</text>
<text x="481.60" y="211.72" font-size="6"  fill="#ececec" text-anchor="start" textLength="5.70" lengthAdjust="spacingAndGlyphs" >1s</text>
<text x="428.80" y="219.86" font-size="6"  fill="#ececec" text-anchor="start" textLength="49.48" lengthAdjust="spacingAndGlyphs" >Model printing time:</text>
<text x="481.60" y="219.86" font-size="6"  fill="#ececec" text-anchor="start" textLength="13.51" lengthAdjust="spacingAndGlyphs" >1h5m</text>
<text x="428.80" y="228.00" font-size="6"  fill="#ececec" text-anchor="start" textLength="25.84" lengthAdjust="spacingAndGlyphs" >Total time:</text>
<text x="481.60" y="228.00" font-size="6"  fill="#ececec" text-anchor="start" textLength="13.51" lengthAdjust="spacingAndGlyphs" >1h5m</text>
<rect x="611.3" y="92" width="6.5" height="290" rx="3.2" fill="#f1f1f1"/>
<rect x="612.7" y="96" width="3.7" height="282" fill="#0a9083"/>
<circle cx="614.6" cy="94.2" r="3.7" fill="#f1f1f1"/>
<circle cx="614.6" cy="94.2" r="2.9" fill="#0a9083"/>
<path d="M613.3,94.2 H615.9 M614.6,92.9 V95.5" stroke="#fff" stroke-width="0.6"/>
<circle cx="614.6" cy="379.9" r="3.6" fill="#f1f1f1"/>
<circle cx="614.6" cy="379.9" r="2.8" fill="#0a9083"/>
<rect x="592.7" y="80.6" width="16.4" height="13.2" fill="#fafafa"/>
<text x="601.00" y="85.90" font-size="5.6"  fill="#0a9083" text-anchor="middle" textLength="9.10" lengthAdjust="spacingAndGlyphs" >300</text>
<text x="601.00" y="92.30" font-size="5.6"  fill="#0a9083" text-anchor="middle" textLength="14.00" lengthAdjust="spacingAndGlyphs" >60.00</text>
<rect x="594.4" y="380" width="14.9" height="13.7" fill="#fafafa"/>
<text x="602.90" y="385.60" font-size="5.6"  fill="#0a9083" text-anchor="middle" textLength="2.96" lengthAdjust="spacingAndGlyphs" >1</text>
<text x="602.50" y="392.10" font-size="5.6"  fill="#0a9083" text-anchor="middle" textLength="10.80" lengthAdjust="spacingAndGlyphs" >0.20</text>
<rect x="127.2" y="425.1" width="352" height="6.4" rx="3.2" fill="#f3f3f3"/>
<rect x="128.6" y="426.5" width="349" height="3.6" rx="1.8" fill="#0a9083"/>
<circle cx="477" cy="428.3" r="3.1" fill="#0a9083"/>
<rect x="481.3" y="424.8" width="12.8" height="6.6" fill="#fafafa"/>
<text x="487.60" y="430.20" font-size="5.7"  fill="#0a9083" text-anchor="middle" textLength="9.04" lengthAdjust="spacingAndGlyphs" >571</text>
<path d="M613.3,422.6 L616.8,424.3 V428.6 L613.3,430.6 L609.8,428.6 V424.3 Z" fill="#0a9083"/>
<path d="M610.3,426.4 L613.3,427.9 L616.3,426.4 M610.3,428.2 L613.3,429.7 L616.3,428.2" stroke="#dff" stroke-width="0.5" fill="none"/>
<rect x="2.1" y="37.3" width="11.9" height="11.6" fill="#f3f3f3"/>
<path d="M7.2,40.2 L4.8,41.8 L7.2,43.4 M8.1,43 L10.8,44.8 L8.1,46.6" stroke="#444" stroke-width="0.7" fill="none"/>
<rect x="2.1" y="51.4" width="54.2" height="58.4" rx="1.5" fill="#dcdcdc"/>
<rect x="5.5" y="54.7" width="46.6" height="46.6" rx="1.6" fill="#d1d1d1" stroke="#3fa99c" stroke-width="1"/>
<text x="12.60" y="65.90" font-size="5.4"  fill="#f0f0f0" text-anchor="start" textLength="3.00" lengthAdjust="spacingAndGlyphs" >1</text>
<g>
<clipPath id="tsil"><path d="M17.400000000000002,68.7 A11.2,7.4 0 0 1 39.8,68.7 L39.8,87.0 A11.2,6.3 0 0 1 17.400000000000002,87.0 Z"/></clipPath>
<g clip-path="url(#tsil)">
<rect x="10" y="55" width="40" height="45" fill="#cfcfcf"/>
<ellipse cx="28.6" cy="86.4" rx="10.6" ry="5.8999999999999995" fill="#e6e6e6"/>
<rect x="17.400000000000002" y="60" width="3.6" height="24" fill="#c2c2c2"/>
<rect x="35.2" y="60" width="5" height="30" fill="#bdbdbd"/>
<rect x="28.7" y="60" width="6.5" height="19.6" fill="#8c8c8c"/>
<path d="M17.400000000000002,68.7 L17.400000000000002,95.0 L28.4,95.0 L28.4,75.7 Q22,74.9 17.400000000000002,68.7 Z" fill="#a0a0a0"/>
<path d="M18.6,87.8 L21.2,81.4 L21.4,89.6 Z" fill="#e6e6e6"/>
<path d="M35.4,74.9 Q38.4,72.7 39.8,68.7 L39.8,95.0 L35.4,95.0 Z" fill="#a9a9a9"/>
<path d="M35.8,83.8 L37.6,84.6 L37.8,89.4 L35.8,90.2 Z" fill="#e6e6e6"/>
<path d="M17.400000000000002,86.8 A11.2,6.3 0 0 0 39.8,86.8" fill="none" stroke="#8d8d8d" stroke-width="2.6"/>
</g>
<path d="M18.200000000000003,89.4 A11.2,6.3 0 0 0 39.0,89.4" fill="none" stroke="#bcbcbc" stroke-width="0.6"/>
<g transform="rotate(4.8 28.6 68.7)">
<ellipse cx="28.6" cy="68.7" rx="10.7" ry="6.9" fill="none" stroke="#a4a4a4" stroke-width="1.1"/>
<path d="M17.6,68.7 A11.0,7.2 0 0 1 39.599999999999994,68.7" fill="none" stroke="#c6c6c6" stroke-width="0.7"/>
<path d="M17.8,69.5 A10.899999999999999,7.2 0 0 0 39.4,69.5" fill="none" stroke="#c2c2c2" stroke-width="0.8"/>
</g></g>
<polygon points="16.3,391.3 43.8,391.3 43.2,401.2 14.9,401.2" fill="#d6d6d6"/>
<polygon points="14.9,401.2 43.2,401.2 42.4,427.4 14.9,427.4" fill="#c5c5c5"/>
<path d="M22.9,391.3 L22.5,401.2 M36.4,391.3 L36.6,401.2 M16,394.6 H43.6 M15.1,400.3 H43.3" stroke="#e6e6e6" stroke-width="0.45" fill="none"/>
<text x="28.60" y="417.60" font-size="5.9"  fill="#555" text-anchor="middle" textLength="13.08" lengthAdjust="spacingAndGlyphs" >Front</text>
<g transform="translate(29.2,398.6) scale(1,0.6)">
<text x="0.00" y="0.00" font-size="5.6"  fill="#666" text-anchor="middle" textLength="9.03" lengthAdjust="spacingAndGlyphs" >Top</text>
</g>
<path d="M15.2,427.4 V405.5" stroke="#8a86e0" stroke-width="0.8"/><path d="M13.2,406 L15.2,401.8 L17.4,406 Z" fill="#8a86e0"/>
<path d="M15.2,427.6 H40" stroke="#d77" stroke-width="0.8"/><path d="M39.6,425.9 L44.4,427.7 L39.6,429.6 Z" fill="#d77"/>
<text x="48.60" y="429.40" font-size="4.6"  fill="#d77" text-anchor="start" textLength="2.30" lengthAdjust="spacingAndGlyphs" >x</text>
<text x="12.70" y="397.00" font-size="4.2"  fill="#8a86e0" text-anchor="start" textLength="2.10" lengthAdjust="spacingAndGlyphs" >z</text>
<text x="16.20" y="416.60" font-size="3.6"  fill="#8c8" text-anchor="start" textLength="1.80" lengthAdjust="spacingAndGlyphs" >y</text>
</svg>
</body></html>
